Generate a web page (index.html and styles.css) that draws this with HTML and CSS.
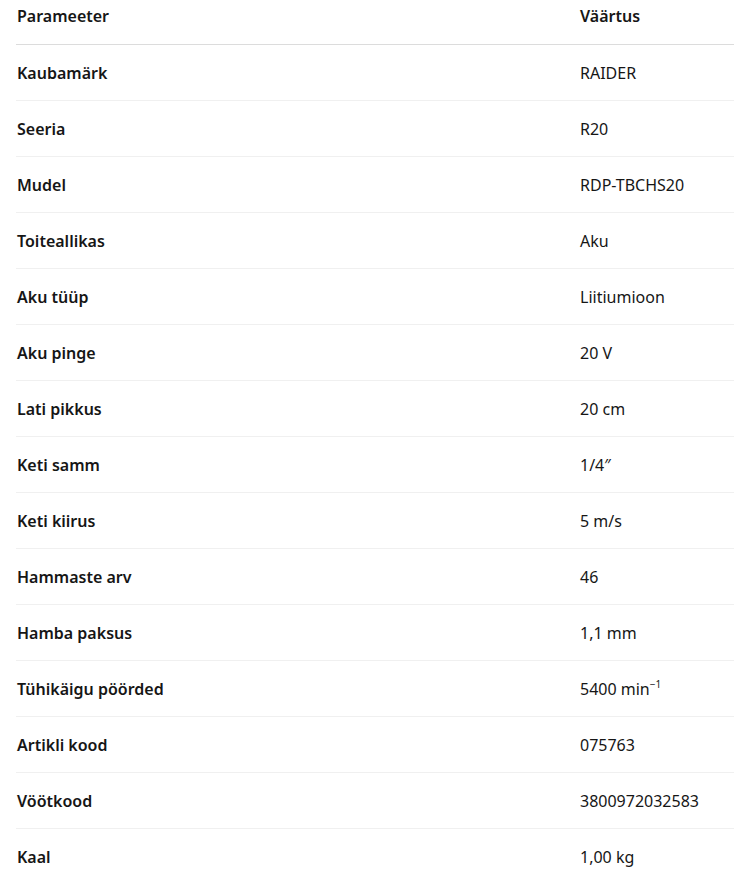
FILE: index.html
```html
<!DOCTYPE html>
<html lang="et">
<head>
<meta charset="utf-8">
<link rel="stylesheet" href="styles.css">
</head>
<body>
<div class="specs">
  <div class="row head"><div class="cell">Parameeter</div><div class="cell">Väärtus</div></div>
  <div class="row"><div class="cell key">Kaubamärk</div><div class="cell">RAIDER</div></div>
  <div class="row"><div class="cell key">Seeria</div><div class="cell">R20</div></div>
  <div class="row"><div class="cell key">Mudel</div><div class="cell">RDP-TBCHS20</div></div>
  <div class="row"><div class="cell key">Toiteallikas</div><div class="cell">Aku</div></div>
  <div class="row"><div class="cell key">Aku tüüp</div><div class="cell">Liitiumioon</div></div>
  <div class="row"><div class="cell key">Aku pinge</div><div class="cell">20 V</div></div>
  <div class="row"><div class="cell key">Lati pikkus</div><div class="cell">20 cm</div></div>
  <div class="row"><div class="cell key">Keti samm</div><div class="cell">1/4″</div></div>
  <div class="row"><div class="cell key">Keti kiirus</div><div class="cell">5 m/s</div></div>
  <div class="row"><div class="cell key">Hammaste arv</div><div class="cell">46</div></div>
  <div class="row"><div class="cell key">Hamba paksus</div><div class="cell">1,1 mm</div></div>
  <div class="row"><div class="cell key">Tühikäigu pöörded</div><div class="cell">5400 min<sup>−1</sup></div></div>
  <div class="row"><div class="cell key">Artikli kood</div><div class="cell">075763</div></div>
  <div class="row"><div class="cell key">Vöötkood</div><div class="cell">3800972032583</div></div>
  <div class="row"><div class="cell key">Kaal</div><div class="cell">1,00 kg</div></div>
</div>
</body>
</html>
```
FILE: styles.css
```css
html, body {
  margin: 0;
  padding: 0;
  background: #fff;
}
body {
  font-family: "Noto Sans", "Open Sans", sans-serif;
  font-size: 16px;
  color: #161616;
  overflow: hidden;
}
.specs {
  margin-left: 16px;
  width: 718px;
}
.row {
  display: grid;
  grid-template-columns: 563px 1fr;
  height: 56px;
  align-items: center;
  border-top: 1px solid #f0f0f0;
  box-sizing: border-box;
}
.row.head {
  height: 45px;
  align-items: start;
  padding-top: 5px;
  border-top: none;
  border-bottom: 1px solid #dcdcdc;
  font-weight: 600;
}
.row.head + .row {
  border-top: none;
  height: 55px;
}
.cell {
  line-height: 22px;
  padding-left: 1px;
  white-space: nowrap;
}
.key {
  font-weight: 600;
}
sup {
  font-size: 10px;
  line-height: 0;
  vertical-align: 7px;
}
```
